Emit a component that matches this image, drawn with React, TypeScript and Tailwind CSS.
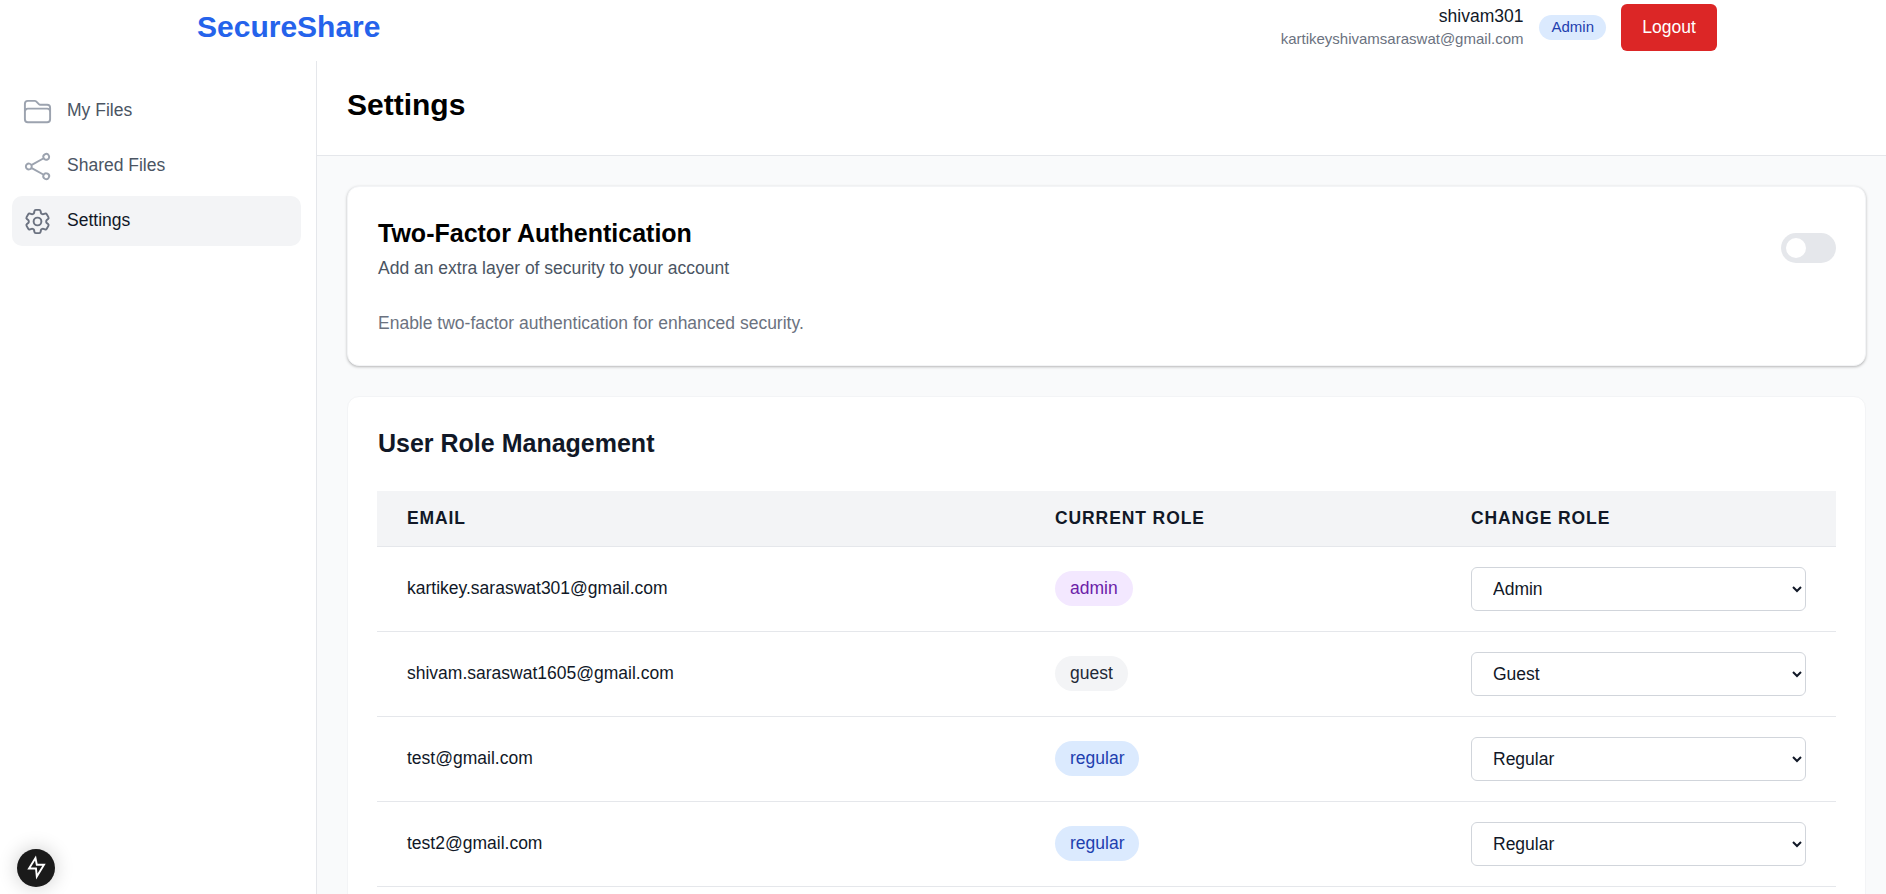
import React from "react";
import { HiOutlineFolder, HiOutlineShare, HiOutlineCog6Tooth } from "react-icons/hi2";

const users = [
  { email: "kartikey.saraswat301@gmail.com", role: "admin", label: "Admin", cls: "bg-[#f3e8ff] text-[#6b21a8]" },
  { email: "shivam.saraswat1605@gmail.com", role: "guest", label: "Guest", cls: "bg-[#f3f4f6] text-[#1f2937]" },
  { email: "test@gmail.com", role: "regular", label: "Regular", cls: "bg-[#dbeafe] text-[#1e40af]" },
  { email: "test2@gmail.com", role: "regular", label: "Regular", cls: "bg-[#dbeafe] text-[#1e40af]" },
];

function NavItem({ icon, label, active }: { icon: React.ReactNode; label: string; active?: boolean }) {
  return (
    <div className={`flex h-[50px] items-center gap-[14px] rounded-[10px] pl-[10px] text-[17.5px] ${active ? "bg-[#f3f4f6] text-[#111827]" : "text-[#4b5563]"}`}>
      {icon}
      <span className="mb-[2px]">{label}</span>
    </div>
  );
}

export default function App() {
  return (
    <div className="flex h-screen flex-col overflow-hidden bg-white font-['Liberation_Sans',Arial,sans-serif]">
      <header className="flex h-[61px] shrink-0 items-center justify-between pb-[7px] pl-[197px] pr-[169px]">
        <div className="mb-[2px] text-[30px] font-bold text-[#2563eb]">SecureShare</div>
        <div className="flex items-center">
          <div className="mr-[16px] flex flex-col items-end">
            <span className="text-[17.5px] leading-[23px] text-[#111827]">shivam301</span>
            <span className="text-[15px] leading-[21px] text-[#6b7280]">kartikeyshivamsaraswat@gmail.com</span>
          </div>
          <span className="mr-[15px] flex h-[25px] items-center rounded-full bg-[#dbeafe] px-[12px] text-[15px] text-[#1e40af]">Admin</span>
          <button className="h-[47px] w-[96px] rounded-[6px] bg-[#dc2626] text-[17.5px] font-medium text-white">Logout</button>
        </div>
      </header>
      <div className="flex min-h-0 flex-1">
        <aside className="w-[317px] shrink-0 border-r border-[#e5e7eb] px-[12px] pt-[25px]">
          <div className="flex w-[289px] flex-col gap-[5px]">
            <NavItem icon={<HiOutlineFolder className="h-[31px] w-[31px] text-[#9ca3af]" />} label="My Files" />
            <NavItem icon={<HiOutlineShare className="h-[31px] w-[31px] text-[#9ca3af]" />} label="Shared Files" />
            <NavItem icon={<HiOutlineCog6Tooth className="h-[31px] w-[31px] text-[#6b7280]" />} label="Settings" active />
          </div>
        </aside>
        <main className="min-w-0 flex-1 bg-[#f9fafb]">
          <div className="flex h-[95px] items-center border-b border-[#e5e7eb] bg-white px-[30px] pb-[8px]">
            <h1 className="text-[30px] font-bold text-black">Settings</h1>
          </div>
          <div className="flex flex-col gap-[30px] pt-[30px] pl-[30px] pr-[20px]">
            <section className="flex h-[180px] justify-between rounded-[12px] border border-[#f3f4f6] bg-white pl-[30px] pr-[29px] pt-[31px] shadow-[0_1px_3px_0_rgba(0,0,0,0.25),0_1px_2px_-1px_rgba(0,0,0,0.1)]">
              <div>
                <h2 className="text-[25px] leading-[30px] font-bold text-black">Two-Factor Authentication</h2>
                <p className="mt-[8px] text-[17.5px] leading-[24px] text-[#4b5563]">Add an extra layer of security to your account</p>
                <p className="mt-[31px] text-[17.5px] leading-[24px] text-[#6b7280]">Enable two-factor authentication for enhanced security.</p>
              </div>
              <div className="mt-[15px] flex h-[30px] w-[55px] items-center rounded-full bg-[#e5e7eb] pl-[5px]">
                <div className="h-[20px] w-[20px] rounded-full bg-white" />
              </div>
            </section>
            <section className="rounded-[12px] border border-[#f3f4f6] bg-white px-[29px] pt-[31px] pb-[30px]">
              <h2 className="pl-[1px] text-[25px] leading-[30px] font-bold text-[#111827]">User Role Management</h2>
              <table className="mt-[33px] w-full table-fixed border-collapse">
                <colgroup>
                  <col className="w-[648px]" />
                  <col className="w-[416px]" />
                  <col />
                </colgroup>
                <thead>
                  <tr className="h-[55px] bg-[#f3f4f6] text-left text-[17.5px] font-bold tracking-[0.9px] text-[#111827]">
                    <th className="px-[30px]">EMAIL</th>
                    <th className="px-[30px]">CURRENT ROLE</th>
                    <th className="px-[30px]">CHANGE ROLE</th>
                  </tr>
                </thead>
                <tbody>
                  {users.map((u) => (
                    <tr key={u.email} className="h-[85px] border-y border-[#e5e7eb] text-[17.5px] text-[#111827]">
                      <td className="px-[30px]">{u.email}</td>
                      <td className="px-[30px]">
                        <span className={`inline-flex h-[35px] items-center rounded-full px-[15px] ${u.cls}`}>{u.role}</span>
                      </td>
                      <td className="px-[30px]">
                        <select defaultValue={u.label} className="h-[44px] w-full rounded-[6px] border border-[#d1d5db] bg-white pl-[17px] text-[17.5px] text-[#111827]">
                          <option>Admin</option>
                          <option>Guest</option>
                          <option>Regular</option>
                        </select>
                      </td>
                    </tr>
                  ))}
                </tbody>
              </table>
            </section>
          </div>
        </main>
      </div>
      <div className="absolute bottom-[7px] left-[17px] flex h-[38px] w-[38px] items-center justify-center rounded-full bg-[#1a1a1a] shadow-[0_0_20px_rgba(0,0,0,0.2)]">
        <svg viewBox="8 8 32 32" className="h-[32px] w-[32px]" fill="none" stroke="white" strokeWidth="1.9" strokeLinejoin="miter">
          <path d="M23.5 14 17 24.5h7l.8 8L32 20.7h-7.2L23.5 14z" />
        </svg>
      </div>
    </div>
  );
}
